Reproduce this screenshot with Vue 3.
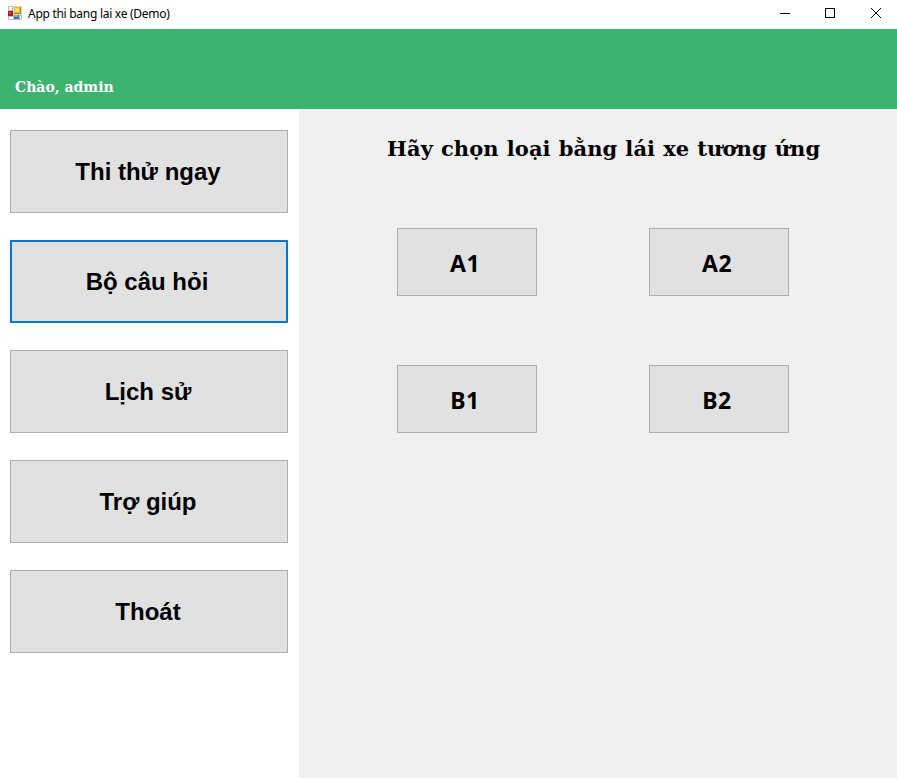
<script setup>
import { ref } from 'vue'

const menu = [
  { id: 'exam', label: 'Thi thử ngay' },
  { id: 'questions', label: 'Bộ câu hỏi' },
  { id: 'history', label: 'Lịch sử' },
  { id: 'help', label: 'Trợ giúp' },
  { id: 'exit', label: 'Thoát' },
]
const licences = ['A1', 'A2', 'B1', 'B2']
const selected = ref('questions')
</script>

<template>
  <div class="window">
    <header class="titlebar">
      <svg class="app-icon" width="14" height="14" viewBox="0 0 14 14" shape-rendering="crispEdges">
        <rect width="14" height="14" fill="#bdbdbd" />
        <path d="M1 1h3v3H1zM1 11h4v2H1zM12 10h1v3h-1z" fill="#fff" />
        <rect x="5" y="0" width="9" height="9" fill="#d8d8d8" />
        <rect x="6" y="1" width="7" height="7" fill="#b58300" />
        <rect x="6" y="1" width="6" height="6" fill="#edb91f" />
        <rect x="7" y="2" width="4" height="4" fill="#ffdf70" />
        <rect x="0" y="5" width="5" height="5" fill="#a81a12" />
        <rect x="1" y="6" width="2" height="2" fill="#d8564c" />
        <rect x="6" y="9" width="5" height="4" fill="#3776d6" />
        <rect x="6" y="9" width="4" height="2" fill="#73a9f3" />
      </svg>
      <span class="app-title">App thi bang lai xe (Demo)</span>
      <div class="controls">
        <svg width="10" height="10" viewBox="0 0 10 10"><path d="M0 5.5h10" /></svg>
        <svg width="10" height="10" viewBox="0 0 10 10"><rect x=".5" y=".5" width="9" height="9" /></svg>
        <svg width="10" height="10" viewBox="0 0 10 10"><path d="M0 0l10 10M10 0L0 10" /></svg>
      </div>
    </header>
    <div class="banner"><span>Chào, admin</span></div>
    <div class="body">
      <nav class="sidebar">
        <button
          v-for="item in menu"
          :key="item.id"
          class="btn menu-btn"
          :class="{ active: item.id === selected }"
          @click="selected = item.id"
        ><span>{{ item.label }}</span></button>
      </nav>
      <main class="content">
        <h1>Hãy chọn loại bằng lái xe tương ứng</h1>
        <div class="grid">
          <button v-for="name in licences" :key="name" class="btn card-btn"><span>{{ name }}</span></button>
        </div>
      </main>
    </div>
  </div>
</template>

<style>
body { margin: 0; background: #fff; }
</style>

<style scoped>
.window { width: 897px; height: 778px; display: flex; flex-direction: column; overflow: hidden; color: #000; }
.titlebar { height: 29px; flex: none; display: flex; align-items: center; box-sizing: border-box; padding: 0 16px 3px 8px; background: #fff; }
.app-icon { flex: none; }
.app-title { margin: 2px 0 0 6px; font: 12px/16px "Noto Sans", sans-serif; letter-spacing: -0.28px; white-space: nowrap; }
.controls { margin-left: auto; display: flex; gap: 35px; }
.controls svg { display: block; fill: none; stroke: #000; stroke-width: 1; }
.controls svg:last-child { margin-left: 1px; overflow: visible; }
.banner { height: 80px; flex: none; box-sizing: border-box; padding: 48px 15px 0; background: #3cb371; color: #fff; font: bold 14px/20px "DejaVu Serif", serif; }
.body { flex: 1; display: flex; }
.sidebar { width: 299px; flex: none; box-sizing: border-box; padding: 21px 11px 0 10px; display: flex; flex-direction: column; gap: 27px; background: #fff; }
.btn { box-sizing: border-box; margin: 0; border: 1px solid #adadad; border-radius: 0; background: #e1e1e1; color: #000; display: flex; align-items: center; justify-content: center; }
.menu-btn { width: 278px; height: 83px; flex: none; padding: 0 2px 0 0; font: bold 24px/28px "Liberation Sans", sans-serif; }
.menu-btn.active { border: 2px solid #0078d7; padding-right: 4px; }
.content { flex: 1; background: #f0f0f0; box-sizing: border-box; padding: 24px 0 0; }
h1 { margin: 0 0 0 88px; font: bold 21px/32px "DejaVu Serif", serif; letter-spacing: 0.1px; word-spacing: 0.6px; white-space: nowrap; }
.grid { margin: 63px 0 0 98px; display: grid; grid-template-columns: 140px 140px; grid-auto-rows: 68px; gap: 69px 112px; }
.card-btn { padding: 2px 4px 0 0; font: bold 23px/30px "Noto Sans", sans-serif; letter-spacing: 0.4px; }
</style>
